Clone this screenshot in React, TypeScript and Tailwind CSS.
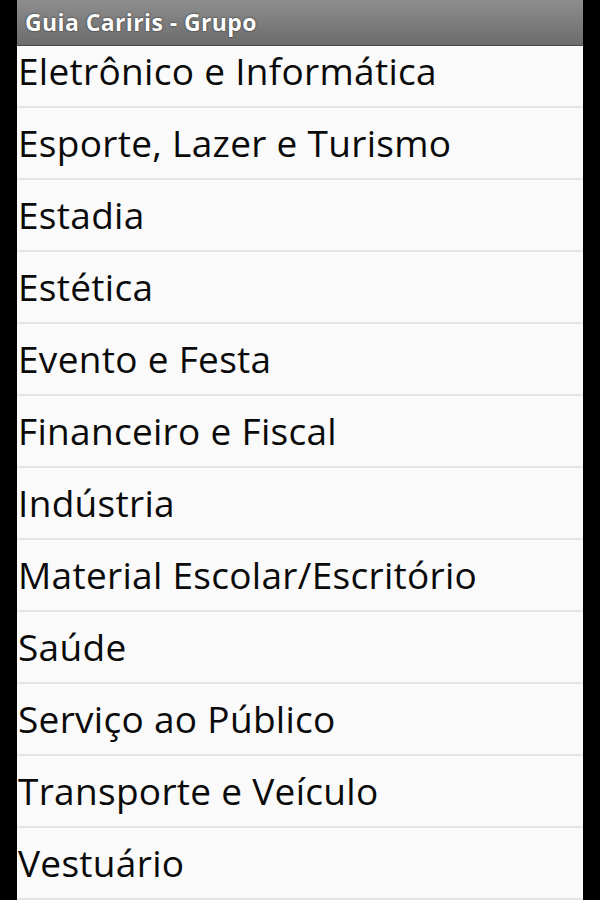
import React from 'react';

const groups = [
  'Eletrônico e Informática',
  'Esporte, Lazer e Turismo',
  'Estadia',
  'Estética',
  'Evento e Festa',
  'Financeiro e Fiscal',
  'Indústria',
  'Material Escolar/Escritório',
  'Saúde',
  'Serviço ao Público',
  'Transporte e Veículo',
  'Vestuário',
];

const App: React.FC = () => {
  return (
    <div className="h-[900px] w-[600px] bg-black flex justify-center pl-[17px] pr-[17px] overflow-hidden">
      <div className="flex-1 flex flex-col bg-[#fafafa]" style={{ fontFamily: '"Open Sans", "DejaVu Sans", sans-serif' }}>
        <div className="h-[46px] shrink-0 relative z-10 bg-gradient-to-b from-[#8e8e8e] to-[#6c6c6c] border-b border-[#4a4a4a] flex items-center px-[8px]">
          <span className="text-white font-bold text-[23px] tracking-[0.4px] [text-shadow:0_0_2px_rgba(0,0,0,0.8)]">
            Guia Cariris - Grupo
          </span>
        </div>
        <div className="flex-1 overflow-hidden">
          <ul className="-mt-[10px]">
            {groups.map((g) => (
              <li
                key={g}
                className="h-[72px] flex items-center pl-[1px] border-b-2 border-[#e4e4e4] text-[37px] text-[#0a0a0a] tracking-[0.3px] whitespace-nowrap"
              >
                {g}
              </li>
            ))}
          </ul>
        </div>
      </div>
    </div>
  );
};

export default App;
